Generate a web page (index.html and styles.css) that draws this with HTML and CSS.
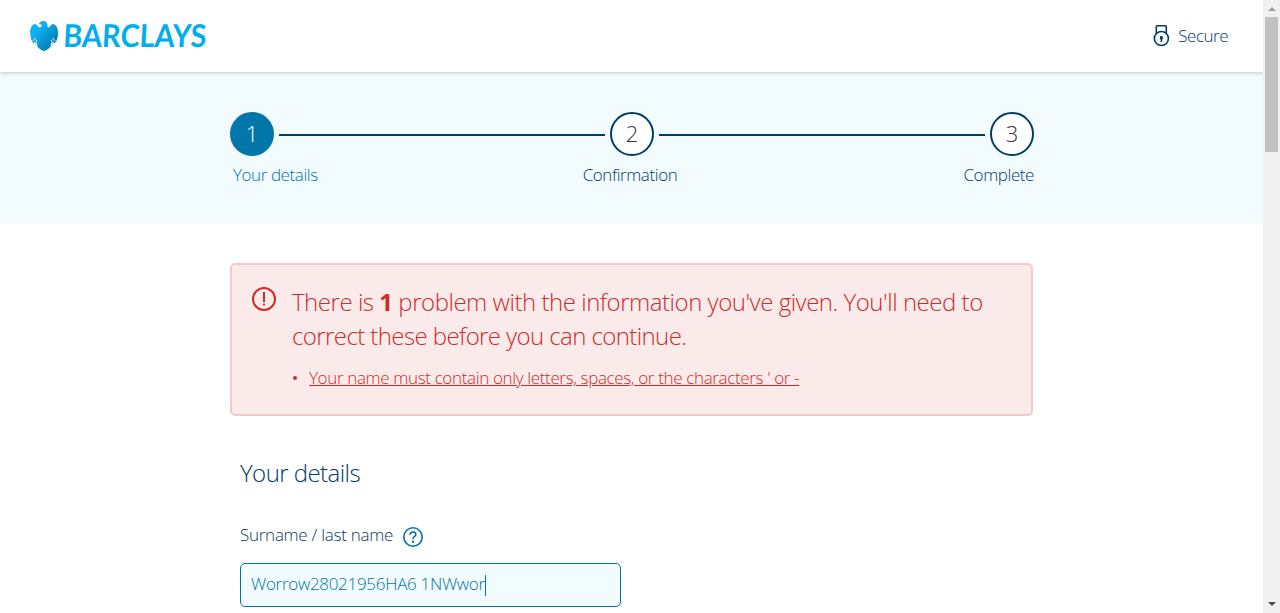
FILE: index.html
```
<!DOCTYPE html>
<html lang="en">
<head>
<meta charset="utf-8">
<title>Your details</title>
<link rel="stylesheet" href="styles.css">
</head>
<body>
<div class="page">
  <header class="header">
    <svg class="logo" width="190" height="48" viewBox="0 0 190 48">
      <defs>
        <linearGradient id="eagle" x1="0" y1="0" x2="1" y2="1"><stop offset=".3" stop-color="#0fb0f0"/><stop offset="1" stop-color="#006a9f"/></linearGradient>
      </defs>
      <path fill="url(#eagle)" d="M4.500 12C1.500 13 0 17 .2 21C.4 26 1.500 29 3.500 31.500L4.800 29.500L4.800 33L7 30.500L7.500 35Q10.500 38 14 39Q17.500 38 20.500 35L21 30.500L23.200 33L23.200 29.500L24.500 31.500C27 29 28 26 28 21C28 16 26.500 13 23.500 12C20.500 12.500 20 14.500 19 15.500C17.500 15.500 17.200 14 17.500 13C17.500 10.500 15.500 9 13.500 9C11 9 10 10 8.800 12L11.500 12.500C12 14 11 15.500 9.500 15.500C8 15 7.500 12.500 4.500 12Z"/>
      <path fill="none" stroke="#fff" stroke-width=".9" d="M2.500 29L6 26M4.500 32.500L7 28M25.500 29L22 26M23.500 32.500L21 28"/>
      <text class="logo-text" transform="translate(32.800 35) skewX(-3)" x="0" y="0" textLength="143" lengthAdjust="spacingAndGlyphs">BARCLAYS</text>
    </svg>
    <div class="secure">
      <svg width="18" height="24" viewBox="0 0 18 24" fill="none" stroke="#003c64" stroke-width="1.600"><path d="M4.300 9.500V2.800Q4.300 1.800 5.300 1.800H13.300Q14.300 1.800 14.300 2.800V9.500"/><circle cx="9.400" cy="14.500" r="7"/><ellipse cx="9.400" cy="13.800" rx="1.500" ry="2" fill="#003c64" stroke="none"/><path d="M9.400 14V18"/></svg>
      <span class="secure-text">Secure</span>
    </div>
  </header>
  <section class="progress">
    <div class="track">
      <span class="dot active">1</span><span class="line"></span><span class="dot">2</span><span class="line"></span><span class="dot">3</span>
    </div>
    <div class="labels"><span class="current">Your details</span><span class="mid">Confirmation</span><span class="last">Complete</span></div>
  </section>
  <main class="main">
    <div class="alert">
      <svg class="alert-icon" width="24" height="24" viewBox="0 0 24 24"><circle cx="12" cy="12" r="11" fill="none" stroke="#cd2c2c" stroke-width="2"/><path d="M11 5h2v10h-2zM11 16.500h2v2h-2z" fill="#cd2c2c"/></svg>
      <div class="alert-body">
        <div class="alert-line first">There is <b>1</b> problem with the information you've given. You'll need to</div>
        <div class="alert-line second">correct these before you can continue.</div>
        <div class="error"><span class="bullet"></span><a class="error-link">Your name must contain only letters, spaces, or the characters ' or -</a></div>
      </div>
    </div>
    <h2 class="title">Your details</h2>
    <div class="label"><span class="label-text">Surname / last name</span>
      <svg width="20" height="20" viewBox="0 0 20 20" fill="none" stroke="#0073a8"><circle cx="10" cy="10" r="9.200" stroke-width="1.600"/><path d="M7.100 7.700Q7.300 5 10 5Q12.800 5 12.800 7.400Q12.800 8.600 11.300 9.600Q10 10.500 10 12.300" stroke-width="1.600"/><path d="M10 13.800V15.700" stroke-width="2"/></svg>
    </div>
    <div class="field"><span class="value">Worrow28021956HA6 1NWwor</span><span class="caret"></span></div>
  </main>
</div>
<aside class="scrollbar"><span class="up"></span><span class="thumb"></span><span class="down"></span></aside>
</body>
</html>
```
FILE: styles.css
```
* { box-sizing: border-box; }
body { margin: 0; height: 613px; overflow: hidden; display: flex; background: #fff; color: #003c64; font: 300 17px/24px "Open Sans", "Noto Sans", sans-serif; white-space: nowrap; }
.page { width: 1263px; height: 613px; overflow: hidden; }
.header { position: relative; height: 72px; padding: 0 35px 0 30px; display: flex; align-items: center; justify-content: space-between; background: #fff; box-shadow: 0 1px 4px rgba(0,0,0,.2); }
.logo { overflow: visible; }
.logo-text { font: 700 31.5px "Lato", sans-serif; fill: #00aeef; }
.secure { display: flex; align-items: center; gap: 8px; }
.secure-text { letter-spacing: -.5px; }
.progress { height: 151px; padding: 40px 229px 0 230px; background: #f2fbfe; }
.track { display: flex; align-items: center; gap: 5px; height: 44px; }
.dot { flex: none; width: 44px; height: 44px; border: 2px solid #003c64; border-radius: 50%; background: #fff; color: #333; font-size: 22px; line-height: 38px; text-align: center; }
.active { background: #0076a9; border-color: #0076a9; color: #fff; }
.line { flex: 1; height: 2px; margin-top: 2px; background: #003c64; }
.labels { display: grid; grid-template-columns: 1fr 1fr 1fr; padding: 7px 0 0 3px; letter-spacing: -.42px; }
.current { color: #0073a8; }
.mid { text-align: center; margin-left: -7px; }
.last { text-align: right; }
.main { padding: 40px 230px 0; }
.alert { height: 153px; border: 2px solid #f3c9cc; border-radius: 5px; background: #faeaea; padding: 20px 20px; display: flex; gap: 16px; color: #cd2c2c; }
.alert-icon { flex: none; margin-top: 2px; }
.alert-line { font-size: 24px; line-height: 34px; letter-spacing: -.47px; }
.second { letter-spacing: -.59px; }
.alert b { font-weight: 700; }
.error { display: flex; align-items: center; margin-top: 13px; letter-spacing: -.35px; }
.bullet { width: 4px; height: 4px; margin: 0 12px 0 1px; border-radius: 50%; background: #cd2c2c; }
.error-link { text-decoration: underline; }
.title { margin: 41px 0 0 10px; font-size: 24px; font-weight: 300; line-height: 32px; letter-spacing: -.55px; }
.label { display: flex; gap: 10px; margin: 34px 0 0 10px; height: 24px; letter-spacing: -.27px; }
.label svg { margin-top: 4px; }
.field { width: 381px; height: 44px; margin: 16px 0 0 10px; padding: 0 10px 2px; border: 1px solid #0073a8; border-radius: 5px; background: #f2fbfe; display: flex; align-items: center; color: #0073a8; letter-spacing: -.29px; }
.caret { width: 1px; height: 21px; margin-top: 2px; background: #0073a8; }
.scrollbar { width: 17px; height: 613px; background: #f1f1f1; display: flex; flex-direction: column; align-items: center; }
.up { margin-top: 7px; border: 4px solid transparent; border-top: 0; border-bottom-color: #a0a0a0; }
.thumb { width: 13px; height: 135px; margin-top: 6px; background: #c1c1c1; }
.down { margin-top: auto; margin-bottom: 7px; border: 4px solid transparent; border-bottom: 0; border-top-color: #505050; }
```
